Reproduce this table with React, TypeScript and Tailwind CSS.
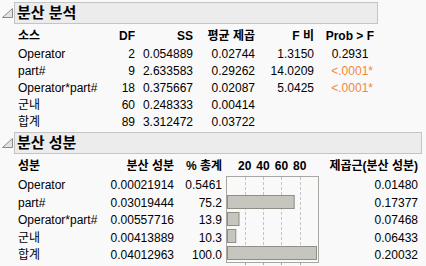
const font = { fontFamily: '"Liberation Sans", "Noto Sans CJK KR", sans-serif' };

const anova = [
  { src: "Operator", df: "2", ss: "0.054889", ms: "0.02744", f: "1.3150", p: "0.2931", sig: false },
  { src: "part#", df: "9", ss: "2.633583", ms: "0.29262", f: "14.0209", p: "<.0001", sig: true },
  { src: "Operator*part#", df: "18", ss: "0.375667", ms: "0.02087", f: "5.0425", p: "<.0001", sig: true },
  { src: "군내", df: "60", ss: "0.248333", ms: "0.00414", f: "", p: "", sig: false },
  { src: "합계", df: "89", ss: "3.312472", ms: "0.03722", f: "", p: "", sig: false },
];

const comps = [
  { name: "Operator", vc: "0.00021914", pct: 0.5461, pctText: "0.5461", sd: "0.01480" },
  { name: "part#", vc: "0.03019444", pct: 75.2, pctText: "75.2", sd: "0.17377" },
  { name: "Operator*part#", vc: "0.00557716", pct: 13.9, pctText: "13.9", sd: "0.07468" },
  { name: "군내", vc: "0.00413889", pct: 10.3, pctText: "10.3", sd: "0.06433" },
  { name: "합계", vc: "0.04012963", pct: 100, pctText: "100.0", sd: "0.20032" },
];

function Tri() {
  return (
    <div className="w-[14px] shrink-0 pt-[6px] pl-[2px]">
      <svg width="11" height="10" viewBox="0 0 11 10">
        <polygon points="0.5,9.5 10.5,0.5 10.5,9.5" fill="#e4e4e4" stroke="#8a8a8a" strokeWidth="1" />
      </svg>
    </div>
  );
}

function Header({ title, width }: { title: string; width: string }) {
  return (
    <div className={`flex ${width}`}>
      <Tri />
      <div className="flex-1 h-[22px] border border-[#c4c4c4] bg-[#ececec] pl-[2px] text-[15px] font-bold leading-[20px] text-black">
        {title}
      </div>
    </div>
  );
}

function Chart() {
  const dashes = [19, 37, 55, 74];
  return (
    <svg width="93" height="89" viewBox="0 0 93 89" className="ml-[4px] -mt-[1px]">
      <rect x="0.5" y="0.5" width="92" height="86" fill="none" stroke="#a8a8a2" />
      {dashes.map((x) => (
        <g key={x}>
          <line x1={x + 0.5} y1="1" x2={x + 0.5} y2="86" stroke="#c4c4c4" strokeDasharray="3 2" />
          <line x1={x + 0.5} y1="87" x2={x + 0.5} y2="89" stroke="#a8a8a2" />
        </g>
      ))}
      {comps.map((c, i) =>
        c.pct * 0.9 < 1 ? null : (
          <rect
            key={c.name}
            x="1.5"
            y={2.5 + i * 17}
            width={c.pct * 0.9 - 1}
            height="13"
            fill="#c6c6be"
            stroke="#8e8e86"
          />
        )
      )}
    </svg>
  );
}

export default function App() {
  return (
    <div className="w-[426px] h-[266px] overflow-hidden bg-[#f9f9f9] text-black text-[12px]" style={font}>
      <div className="pt-[2px]">
        <Header title="분산 분석" width="w-[378px]" />
        <div className="pl-[18px] pt-[3px]">
          <div className="grid grid-cols-[88px_29px_58px_62px_59px_60px]">
            <div className="font-bold leading-[19px]">소스</div>
            <div className="font-bold leading-[19px] text-right">DF</div>
            <div className="font-bold leading-[19px] text-right">SS</div>
            <div className="font-bold leading-[19px] text-right">평균 제곱</div>
            <div className="font-bold leading-[19px] text-right">F 비</div>
            <div className="font-bold leading-[19px] text-right">Prob &gt; F</div>
            {anova.map((r) => (
              <div key={r.src} className="contents">
                <div className="leading-[17px] whitespace-nowrap">{r.src}</div>
                <div className="leading-[17px] text-right">{r.df}</div>
                <div className="leading-[17px] text-right">{r.ss}</div>
                <div className="leading-[17px] text-right">{r.ms}</div>
                <div className="leading-[17px] text-right">{r.f}</div>
                <div className={`leading-[17px] text-right pr-[1px] ${r.sig ? "text-[#f0883e]" : ""}`}>
                  {r.p}
                  {r.p && <span className={r.sig ? "" : "invisible"}>*</span>}
                </div>
              </div>
            ))}
          </div>
        </div>
      </div>

      <div className="mt-[1px]">
        <Header title="분산 성분" width="w-[422px]" />
        <div className="pl-[18px] pt-[2px]">
          <div className="grid grid-cols-[92px_64px_48px_96px_100px]">
            <div className="font-bold leading-[21px]">성분</div>
            <div className="font-bold leading-[21px] text-right">분산 성분</div>
            <div className="font-bold leading-[21px] text-right">% 총계</div>
            <div className="font-bold leading-[21px] flex gap-[5px] pl-[16px]">
              <span>20</span>
              <span>40</span>
              <span>60</span>
              <span>80</span>
            </div>
            <div className="font-bold leading-[21px] text-right whitespace-nowrap">제곱근(분산 성분)</div>
            <div className="col-start-4 row-start-2 row-span-5">
              <Chart />
            </div>
            {comps.map((c) => (
              <div key={c.name} className="contents">
                <div className="leading-[17px] whitespace-nowrap">{c.name}</div>
                <div className="leading-[17px] text-right">{c.vc}</div>
                <div className="leading-[17px] text-right">{c.pctText}</div>
                <div className="leading-[17px] text-right">{c.sd}</div>
              </div>
            ))}
          </div>
        </div>
      </div>
    </div>
  );
}
